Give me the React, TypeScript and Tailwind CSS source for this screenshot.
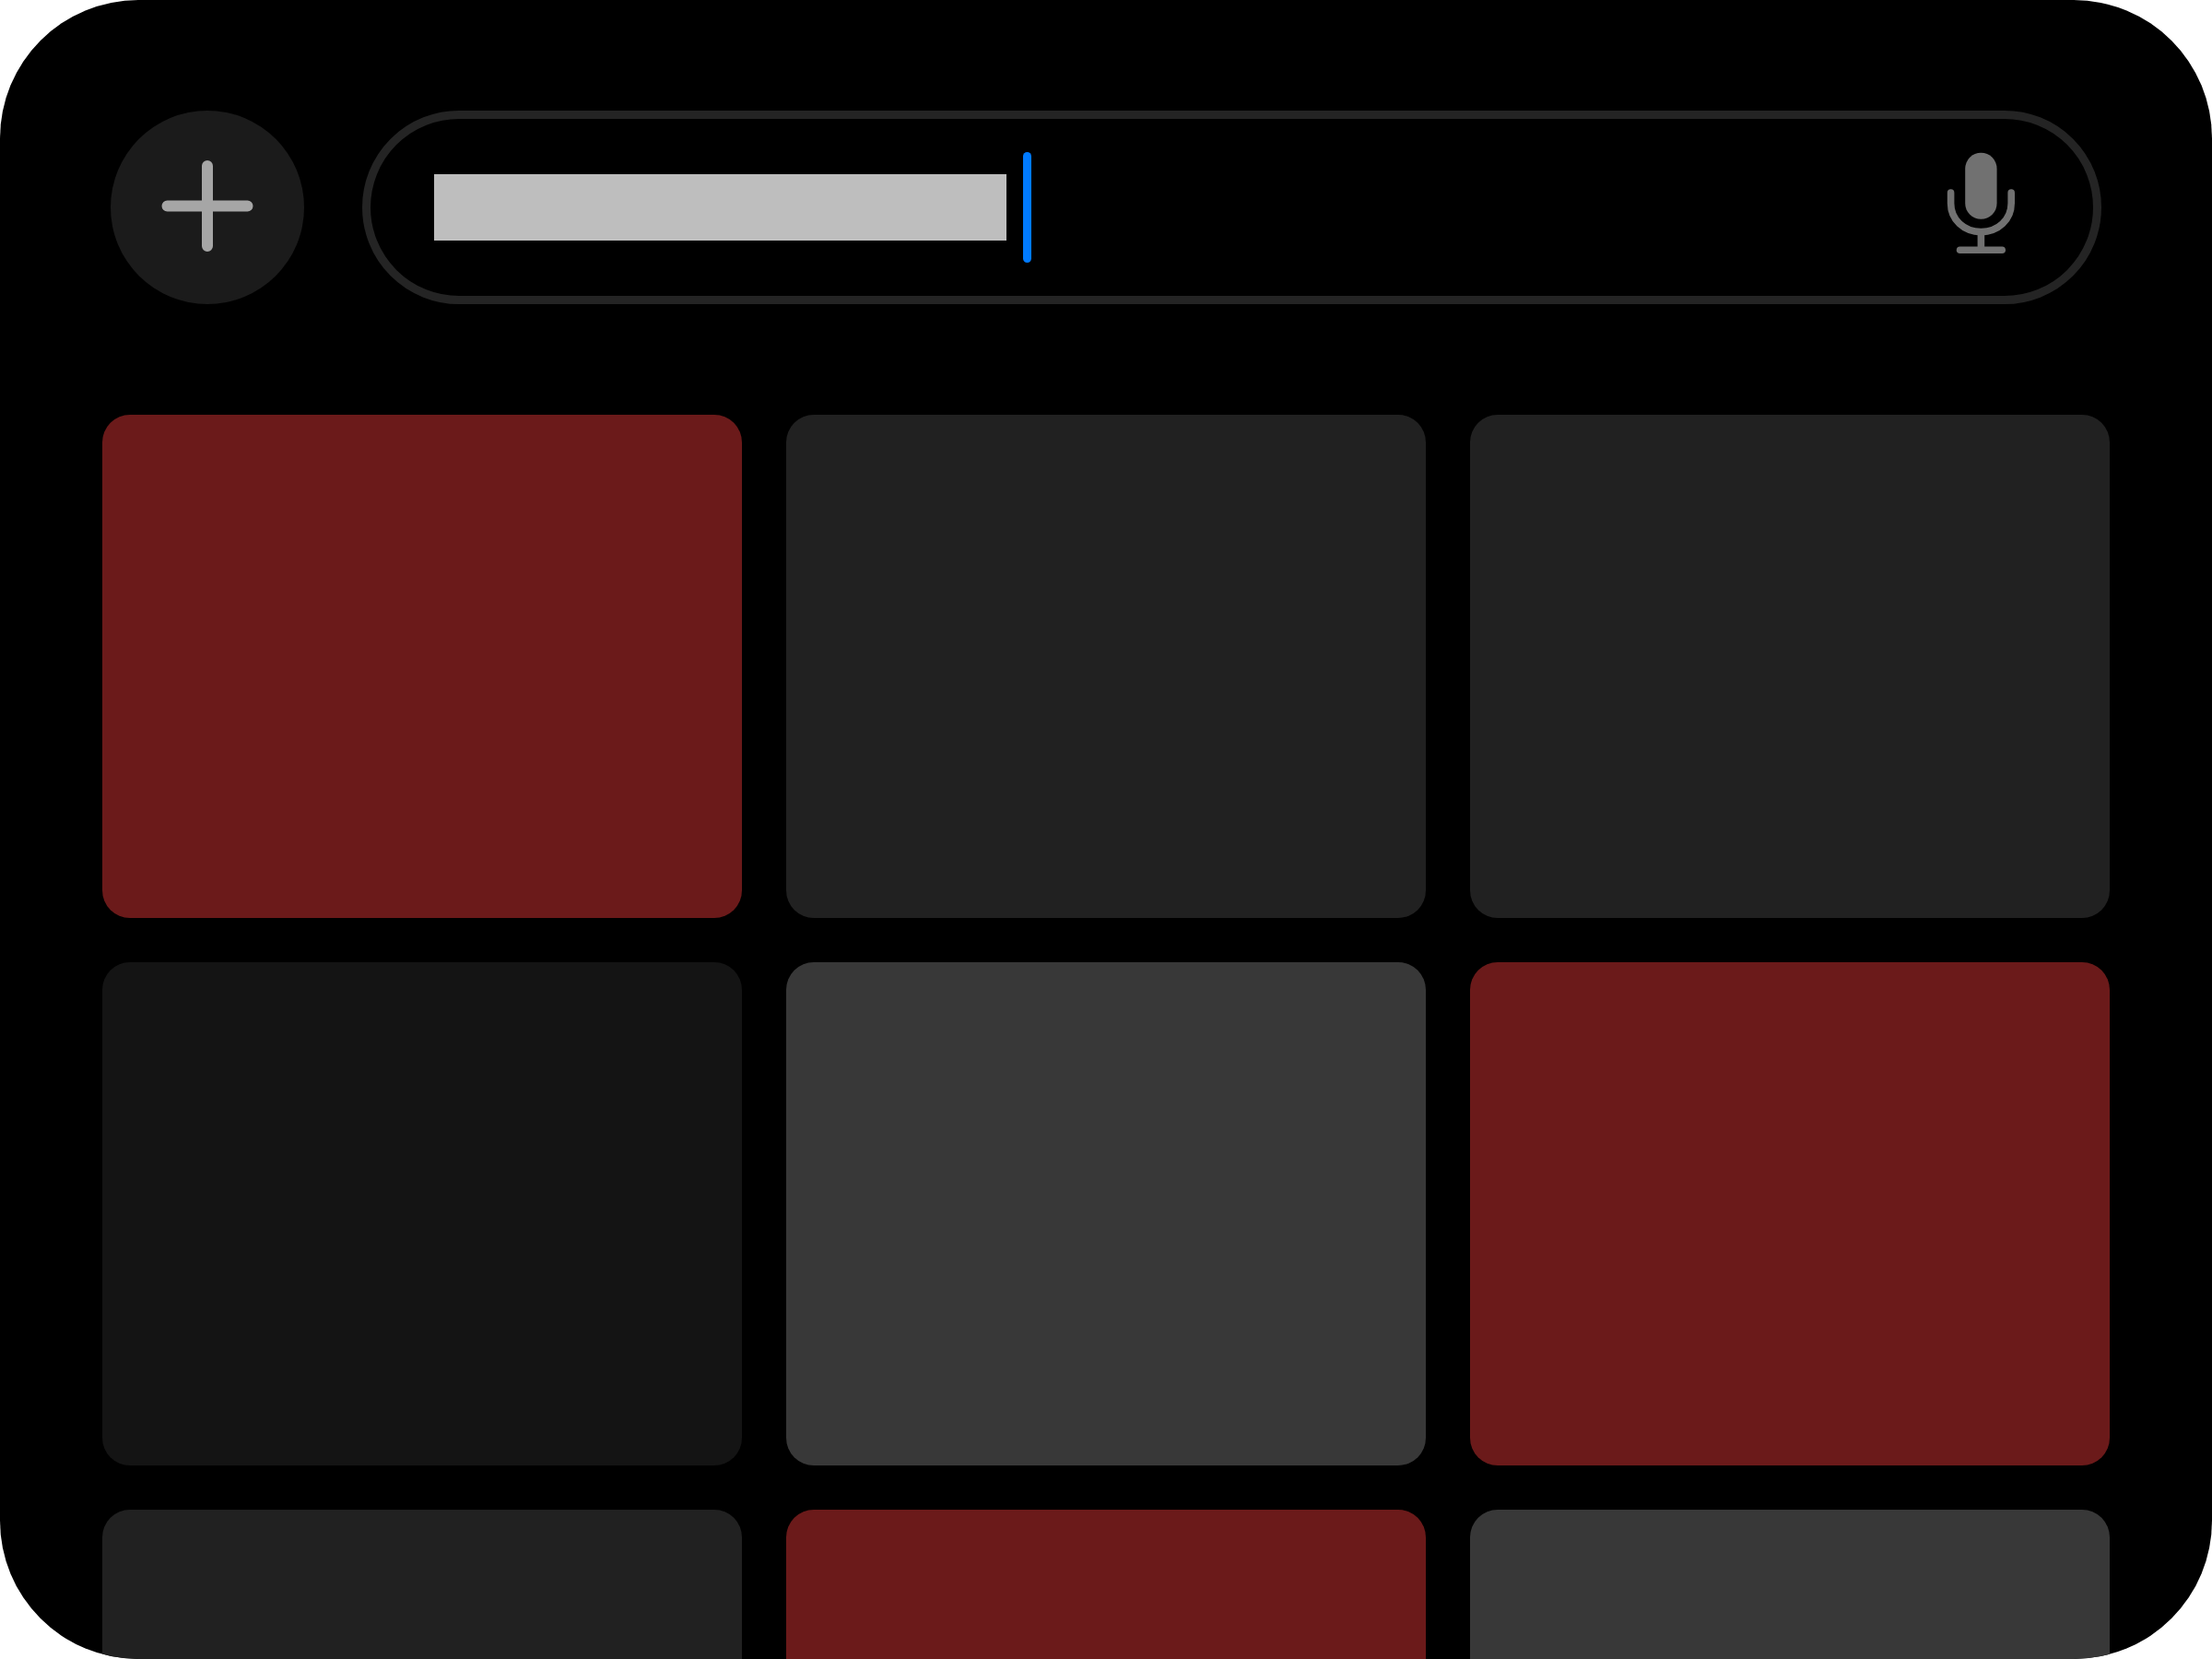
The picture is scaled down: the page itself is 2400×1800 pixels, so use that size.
const tiles = [
  'bg-[#6b1a1a]',
  'bg-[#212121]',
  'bg-[#212121]',
  'bg-[#141414]',
  'bg-[#383838]',
  'bg-[#6b1a1a]',
  'bg-[#212121]',
  'bg-[#6b1a1a]',
  'bg-[#383838]',
];

function PlusIcon() {
  return (
    <svg
      viewBox="0 0 210 210"
      className="size-full"
      fill="none"
      stroke="#a6a6a6"
      strokeWidth="12"
      strokeLinecap="round"
      aria-hidden="true"
    >
      <path d="M105 60V147M61.5 103.4H148.5" />
    </svg>
  );
}

function MicIcon() {
  return (
    <svg
      viewBox="0 0 74 120"
      className="h-[120px] w-[74px] overflow-visible"
      fill="none"
      stroke="#717171"
      strokeWidth="7.6"
      strokeLinecap="round"
      aria-hidden="true"
    >
      <rect x="19.2" y="0.8" width="34.4" height="72" rx="17.2" fill="#717171" stroke="none" />
      <path d="M3.6 44V55.5C3.6 73.5 18 86.6 36.4 86.6S69.2 73.5 69.2 55.5V44" />
      <path d="M36.4 87V105" />
      <path d="M13.6 106.3H59.2" />
    </svg>
  );
}

function SearchBar() {
  return (
    <header className="flex items-center gap-[63px] px-[120px]">
      <button type="button" aria-label="Add" className="size-[210px] shrink-0 rounded-full bg-[#1b1b1b]">
        <PlusIcon />
      </button>
      <div className="flex h-[210px] min-w-0 flex-1 items-center rounded-full border-[9px] border-[#242424] pr-[84px] pl-[69px]">
        <label htmlFor="query" className="flex min-w-0 flex-1 items-center">
          <span className="h-[72px] w-[621px] bg-[#bebebe]" />
          <span className="ml-[18px] h-[120px] w-[9px] shrink-0 rounded-full bg-[#007aff]" />
          <input
            id="query"
            type="text"
            aria-label="Search"
            className="h-[120px] min-w-0 flex-1 bg-transparent font-['Inter',sans-serif] text-7xl text-[#bebebe] caret-[#007aff] outline-none"
          />
        </label>
        <button type="button" aria-label="Voice input" className="shrink-0">
          <MicIcon />
        </button>
      </div>
    </header>
  );
}

export default function App() {
  return (
    <div className="h-screen bg-white">
      <main className="flex h-full flex-col gap-[120px] overflow-hidden rounded-[150px] bg-black pt-[120px]">
        <SearchBar />
        <ul className="grid grid-cols-3 gap-12 px-[111px]">
          {tiles.map((color, i) => (
            <li key={i} className={`aspect-[694/546] rounded-[30px] ${color}`} />
          ))}
        </ul>
      </main>
    </div>
  );
}
